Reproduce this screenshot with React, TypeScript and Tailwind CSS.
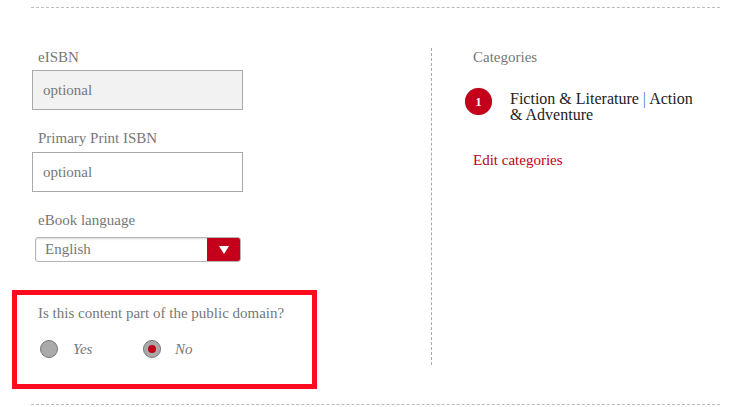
import React from "react"

const serif = { fontFamily: '"Liberation Serif", Georgia, serif' }

function Label({ children, className = "" }: { children: React.ReactNode; className?: string }) {
  return (
    <div className={`ml-[38px] h-[18px] leading-[18px] text-[15px] text-[#777] ${className}`}>
      {children}
    </div>
  )
}

function Radio({ checked }: { checked?: boolean }) {
  return (
    <span className="flex h-[18px] w-[18px] items-center justify-center rounded-full border border-[#777] bg-[#aaa]">
      {checked && <span className="h-[8px] w-[8px] rounded-full bg-[#c4001a]" />}
    </span>
  )
}

export default function App() {
  return (
    <div className="relative h-[407px] w-[741px] overflow-hidden bg-white" style={serif}>
      {/* top rule */}
      <div className="ml-[31px] mt-[7px] w-[689px] border-t border-dashed border-[#bbb]" />

      <div className="mt-[40px] flex">
        {/* left column */}
        <div className="w-[431px]">
          <Label>eISBN</Label>
          <div className="ml-[32px] mt-[4px] flex h-[40px] w-[211px] items-center border border-[#aaa] bg-[#f2f2f2] pl-[10px] text-[15px] text-[#777]">
            optional
          </div>

          <Label className="mt-[19px]">Primary Print ISBN</Label>
          <div className="ml-[32px] mt-[5px] flex h-[40px] w-[211px] items-center border border-[#aaa] bg-white pl-[10px] text-[15px] text-[#777]">
            optional
          </div>

          <Label className="mt-[19px]">eBook language</Label>
          <div className="ml-[35px] mt-[8px] flex h-[25px] w-[206px] overflow-hidden rounded-[3px] border border-[#b5b5b5] shadow-[inset_0_1px_2px_rgba(0,0,0,0.15)]">
            <div className="flex flex-1 items-center pl-[9px] text-[15px] text-[#777]">English</div>
            <div className="flex w-[33px] items-center justify-center bg-[#c4001a]">
              <svg width="10" height="8" viewBox="0 0 10 8">
                <path d="M0 0 H10 L5 8 Z" fill="#fff" />
              </svg>
            </div>
          </div>

          {/* public domain box */}
          <div className="ml-[12px] mt-[28px] h-[99px] w-[305px] border-[5px] border-[#fe0b1f]">
            <div className="ml-[21px] mt-[9px] h-[18px] leading-[18px] text-[15px] text-[#777]">
              Is this content part of the public domain?
            </div>
            <div className="ml-[23px] mt-[16px] flex items-center text-[15px] italic text-[#777]">
              <Radio />
              <span className="ml-[15px] w-[70px]">Yes</span>
              <Radio checked />
              <span className="ml-[14px]">No</span>
            </div>
          </div>
        </div>

        {/* right column */}
        <div className="h-[317px] border-l border-dashed border-[#aaa] pl-[41px]">
          <div className="h-[18px] leading-[18px] text-[15px] text-[#777]">Categories</div>
          <div className="ml-[-8px] mt-[22px] flex items-start">
            <span className="flex h-[27px] w-[27px] items-center justify-center rounded-full bg-[#c4001a] text-[12px] font-bold text-white shadow-[0_0_1px_rgba(0,0,0,0.4)]">
              1
            </span>
            <div className="ml-[18px] mt-[3px] w-[192px] text-[16px] leading-[16px] text-[#222]">
              Fiction &amp; Literature <span className="text-[#4a7fc0]">|</span> Action &amp; Adventure
            </div>
          </div>
          <div className="mt-[28px] h-[18px] leading-[18px] text-[15px] text-[#c0001b]">Edit categories</div>
        </div>
      </div>

      {/* bottom rule */}
      <div className="absolute left-[31px] top-[404px] w-[689px] border-t border-dashed border-[#bbb]" />
    </div>
  )
}
